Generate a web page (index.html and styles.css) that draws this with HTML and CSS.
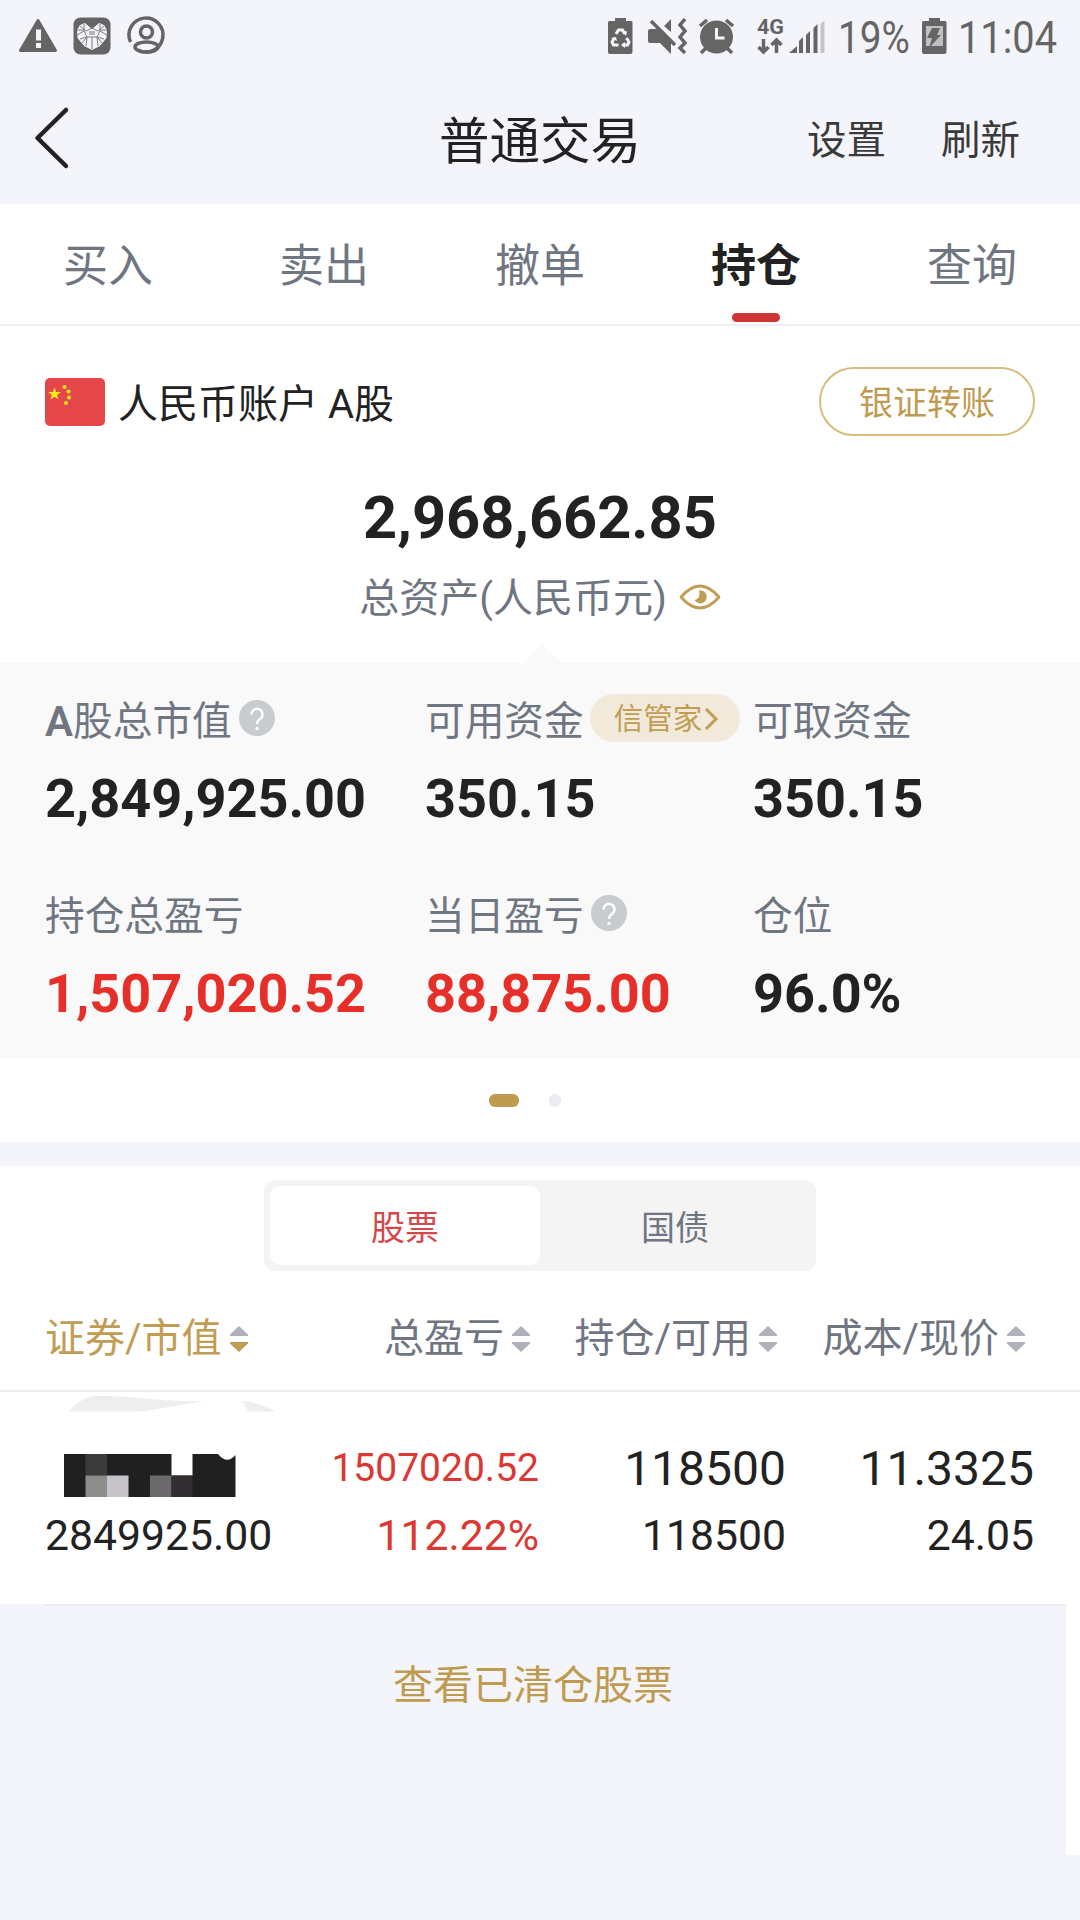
FILE: index.html
```html
<!DOCTYPE html>
<html lang="zh-CN">
<head>
	<meta charset="UTF-8">
	<title>普通交易</title>
	<link rel="stylesheet" href="styles.css">
</head>
<body>
<div class="page">
	<!-- 状态栏 -->
	<div class="status">
		<div class="status-l">
			<svg width="65" height="62" viewBox="0 0 65 62"><path d="M38 20.500L55.500 50.500H20.500Z" fill="#656565" stroke="#656565" stroke-width="3" stroke-linejoin="round"/><path d="M36 29.500h5v11h-5zM36 43h5v5h-5z" fill="#f4f5fa"/></svg>
			<svg width="55" height="62" viewBox="65 0 55 62"><rect x="73.500" y="17.500" width="37" height="37" rx="7" fill="#656565"/><path d="M92 50L84 46L77.500 38L77 30L80 25L85 23L92 29L99 23L104 25L107 30L106.500 38L100 46Z" fill="#f4f5fa"/><path d="M80 26l6 5 6-3 6 3 6-5M77 35l7-4 3 6-5 6M107 35l-7-4-3 6 5 6M84 24v7M100 24v7M86 46l1-9h10l1 9M92 37v12M77 30h7M100 30h7M80 39l7-2M104 39l-7-2" stroke="#7c7c7c" stroke-width="1" fill="none"/><path d="M89 31h6v4h-6z" fill="#b5b5b7"/></svg>
			<svg width="60" height="62" viewBox="120 0 60 62" fill="none" stroke="#656565" stroke-width="3.500"><path d="M130.500 42A17 17 0 1 1 138 50"/><circle cx="146.500" cy="32" r="6"/><ellipse cx="146.500" cy="47" rx="11.500" ry="5"/></svg>
		</div>
		<div class="status-r">
			<svg width="37" height="62" viewBox="603 0 37 62"><path d="M615 21v-3h11v3h5q1.500 0 1.500 1.500V52q0 2-2 2h-20.500q-2 0-2-2V22.500q0-1.500 1.500-1.500z" fill="#656565"/><path d="M616 34l2.500-4h4l2.500 4M626.500 38l2.500 4-1.500 3h-5M618.500 45h-5l-1.500-3 2.500-4" fill="none" stroke="#f4f5fa" stroke-width="3"/><path d="M623 32l4-1-1 5zM625 42v6l-4-3zM611 38l5-1 1 4z" fill="#f4f5fa"/></svg>
			<svg width="54" height="62" viewBox="640 0 54 62"><path d="M648 31q0-2 2-2h8l13 12v13l-11-11h-10q-2 0-2-2zM671 19v13l-7-6z" fill="#656565"/><path d="M651 21L675 45M685 19l-5 6 5 6-5 6 5 6-5 5 5 5" fill="none" stroke="#656565" stroke-width="3.500"/></svg>
			<svg width="56" height="62" viewBox="694 0 56 62"><circle cx="716.500" cy="37" r="16.500" fill="#656565"/><path d="M706 48l-5 5M727 48l5 5M700 26l7-6M733 26l-7-6" stroke="#656565" stroke-width="3.500"/><path d="M716.500 28v10h8" fill="none" stroke="#f4f5fa" stroke-width="3"/></svg>
			<svg width="38" height="62" viewBox="750 0 38 62"><text class="net" x="757" y="33.500" textLength="27" lengthAdjust="spacingAndGlyphs">4G</text><path d="M763.500 39v13M758.500 47l5 5 5-5M776.500 53V40M771.500 45l5-5 5 5" fill="none" stroke="#656565" stroke-width="3.500"/></svg>
			<svg width="47" height="62" viewBox="788 0 47 62"><path d="M789 53l8-7v7zM799 53V41l4-4v16zM806 53V35l4-4v22zM813.500 53V28l4-4v29z" fill="#656565"/><path d="M820.500 53V24l4-3.500V53z" fill="#c3c4c8"/></svg>
			<svg width="80" height="62" viewBox="835 0 80 62"><text class="num" x="838" y="53" textLength="72" lengthAdjust="spacingAndGlyphs">19%</text></svg>
			<svg width="40" height="62" viewBox="915 0 40 62"><path d="M929 21v-3h11v3h5q1.500 0 1.500 1.500V52q0 2-2 2H924q-2 0-2-2V22.500q0-1.500 1.500-1.500z" fill="#656565"/><path d="M926 26h17v20h-17z" fill="#bfc0c3"/><path d="M932 28h8l-3 7h4l-12 13 3-10h-5z" fill="#656565"/></svg>
			<svg width="125" height="62" viewBox="955 0 125 62"><text class="num" x="958" y="53" textLength="99" lengthAdjust="spacingAndGlyphs">11:04</text></svg>
		</div>
	</div>

	<!-- 标题栏 -->
	<div class="nav">
		<svg class="back" width="40" height="64" viewBox="0 0 40 64"><path d="M34 4L5.500 32L34 60" fill="none" stroke="#222" stroke-width="4.500" stroke-linecap="round" stroke-linejoin="round"/></svg>
		<h1 class="nav-tit">普通交易</h1>
		<div class="nav-r"><span>设置</span><span>刷新</span></div>
	</div>

	<ul class="tabs">
		<li>买入</li>
		<li>卖出</li>
		<li>撤单</li>
		<li class="on">持仓</li>
		<li>查询</li>
	</ul>

	<!-- 账户资产 -->
	<div class="account">
		<svg class="flag" width="60" height="48" viewBox="0 0 60 48"><rect width="60" height="48" rx="5" fill="#e4464a"/><g fill="#ffe81a"><path d="M9.500 9.500l1.700 4.500h4.800l-3.900 2.900 1.500 4.700-4.100-2.800-4.100 2.800 1.500-4.700L3 14h4.800z"/><circle cx="19.500" cy="9" r="2"/><circle cx="23.500" cy="13.500" r="2"/><circle cx="24" cy="19.500" r="2"/><circle cx="21" cy="25" r="2"/></g></svg>
		<span class="account-name">人民币账户 A股</span>
		<button class="transfer">银证转账</button>
	</div>
	<div class="total">2,968,662.85</div>
	<div class="total-tit">
		<span>总资产(人民币元)</span>
		<svg class="eye" width="42" height="26" viewBox="0 0 42 26"><path d="M2 13Q21-9 40 13Q21 35 2 13Z" fill="none" stroke="#c19d54" stroke-width="2.800" stroke-linejoin="round"/><path d="M20 6.500a6.500 6.500 0 1 1-4.500 9.500Q22 15 20 6.500Z" fill="#c19d54"/></svg>
	</div>

	<div class="grid">
		<div class="cell">
			<div class="cell-tit"><b>A</b>股总市值<svg class="help" width="36" height="36" viewBox="0 0 36 36"><circle cx="18" cy="18" r="18" fill="#c8cbd0"/><path d="M12.500 14.500a5.500 5.500 0 1 1 8.500 4.500q-3 2-3 5" fill="none" stroke="#fff" stroke-width="2.400"/><circle cx="18" cy="28.500" r="1.700" fill="#fff"/></svg></div>
			<div class="cell-num">2,849,925.00</div>
		</div>
		<div class="cell">
			<div class="cell-tit">可用资金<span class="pill">信管家<svg width="16" height="24" viewBox="0 0 16 24"><path d="M3 2L13 12L3 22" fill="none" stroke="#c19d54" stroke-width="3"/></svg></span></div>
			<div class="cell-num">350.15</div>
		</div>
		<div class="cell">
			<div class="cell-tit">可取资金</div>
			<div class="cell-num">350.15</div>
		</div>
		<div class="cell">
			<div class="cell-tit">持仓总盈亏</div>
			<div class="cell-num red">1,507,020.52</div>
		</div>
		<div class="cell">
			<div class="cell-tit">当日盈亏<svg class="help" width="36" height="36" viewBox="0 0 36 36"><circle cx="18" cy="18" r="18" fill="#c8cbd0"/><path d="M12.500 14.500a5.500 5.500 0 1 1 8.500 4.500q-3 2-3 5" fill="none" stroke="#fff" stroke-width="2.400"/><circle cx="18" cy="28.500" r="1.700" fill="#fff"/></svg></div>
			<div class="cell-num red">88,875.00</div>
		</div>
		<div class="cell">
			<div class="cell-tit">仓位</div>
			<div class="cell-num">96.0%</div>
		</div>
	</div>
	<div class="pager"><i class="on"></i><i></i></div>

	<!-- 持仓列表 -->
	<div class="seg-box">
		<div class="seg"><span class="on">股票</span><span>国债</span></div>
	</div>
	<div class="row head">
		<div class="gold">证券/市值<svg class="sort down" width="18" height="26" viewBox="0 0 18 26"><path d="M9 0L18 8.500V10H0V8.500Z"/><path class="dn" d="M9 26L18 17.500V16H0V17.500Z"/></svg></div>
		<div>总盈亏<svg class="sort" width="18" height="26" viewBox="0 0 18 26"><path d="M9 0L18 8.500V10H0V8.500Z"/><path d="M9 26L18 17.500V16H0V17.500Z"/></svg></div>
		<div>持仓/可用<svg class="sort" width="18" height="26" viewBox="0 0 18 26"><path d="M9 0L18 8.500V10H0V8.500Z"/><path d="M9 26L18 17.500V16H0V17.500Z"/></svg></div>
		<div>成本/现价<svg class="sort" width="18" height="26" viewBox="0 0 18 26"><path d="M9 0L18 8.500V10H0V8.500Z"/><path d="M9 26L18 17.500V16H0V17.500Z"/></svg></div>
	</div>
	<div class="row stock">
		<div>
			<!-- 打码的股票名称 -->
			<svg class="mask" width="240" height="110" viewBox="45 1392 240 110">
				<path d="M69 1411.500Q82 1396 97 1396C130 1395 145 1401 205 1401Q175 1406 142 1411.500ZM241 1401Q260 1402 275 1411.500H247.500Q247 1406 241 1401Z" fill="#eee"/>
				<path d="M64 1454H171.500V1475.500H192.500V1454H218Q227 1465 235.500 1455V1497H64Z" fill="#202020"/>
				<path d="M85.500 1454H107V1475.500H85.500Z" fill="#3b3b3b"/>
				<path d="M85.500 1475.500H107V1497H85.500Z" fill="#8c8e8b"/>
				<path d="M107 1475.500H128.500V1497H107Z" fill="#c6c4c8"/>
				<path d="M150 1475.500H171.500V1497H150Z" fill="#6b696c"/>
				<path d="M171.500 1475.500H192.500V1497H171.500Z" fill="#332e32"/>
			</svg>
			<p>2849925.00</p>
		</div>
		<div class="red"><p class="profit">1507020.52</p><p>112.22%</p></div>
		<div><p class="big">118500</p><p>118500</p></div>
		<div><p class="big">11.3325</p><p>24.05</p></div>
	</div>
	<div class="foot"><a class="cleared">查看已清仓股票</a></div>
</div>
</body>
</html>
```
FILE: styles.css
```css
body,h1,ul,p{
	margin: 0;
	padding: 0;
}
ul{
	list-style: none;
}
svg{
	display: block;
	flex: none;
	overflow: visible;
}
body{
	background-color: #f4f5fa;
	font-family: Roboto,"Noto Sans CJK SC",sans-serif;
	color: #222;
}
.page{
	width: 1080px;
	height: 1920px;
	overflow: hidden;
}
.status{
	display: flex;
	justify-content: space-between;
	height: 62px;
}
.status-l,.status-r{
	display: flex;
}
.num{
	font-size: 45px;
	fill: #656565;
}
.net{
	font-size: 20px;
	font-weight: bold;
	fill: #656565;
}
.nav{
	display: grid;
	grid-template-columns: 1fr 200px 1fr;
	align-items: center;
	box-sizing: border-box;
	height: 142px;
	padding: 16px 60px 0 32px;
}
.back{
	margin-top: -6px;
}
.nav-tit{
	font-size: 50.500px;
	font-weight: normal;
	line-height: 60px;
	white-space: nowrap;
	margin: 2px 0 0 13px;
}
.nav-r{
	display: flex;
	justify-content: flex-end;
	gap: 55px;
	font-size: 39.500px;
	line-height: 60px;
	color: #3a3a3a;
}
.tabs{
	display: flex;
	height: 120px;
	border-bottom: 2px solid #eeeff3;
	background-color: #fff;
}
.tabs li{
	display: flex;
	flex-direction: column;
	align-items: center;
	flex: 1;
	font-size: 45px;
	line-height: 109px;
	padding-top: 8px;
	color: #6f7682;
	height: 111px;
}
.tabs .on{
	color: #222;
	font-weight: bold;
}
.tabs .on:after{
	content: "";
	flex: none;
	width: 48px;
	height: 9px;
	margin-top: -8px;
	border-radius: 5px;
	background-color: #d03535;
}
.account{
	display: flex;
	align-items: center;
	height: 152px;
	padding: 0 45px;
	background-color: #fff;
}
.account-name{
	margin-left: 13px;
	padding-top: 5px;
	font-size: 40px;
	line-height: 60px;
}
.transfer{
	width: 216px;
	height: 69px;
	margin: 0 0 1px auto;
	padding: 2px 0 0;
	border: 2px solid #d9bc7c;
	border-radius: 35px;
	background-color: #fff;
	font-family: inherit;
	font-size: 34px;
	line-height: 50px;
	color: #bf9b52;
}
.total{
	font-size: 59.500px;
	font-weight: bold;
	line-height: 80px;
	text-align: center;
	background-color: #fff;
}
.total-tit{
	display: flex;
	justify-content: center;
	align-items: center;
	gap: 12px;
	height: 80px;
	padding-bottom: 25px;
	font-size: 40px;
	color: #6f7682;
	background-color: #fff;
}
.total-tit span{
	line-height: 80px;
	padding-top: 1px;
}
.eye{
	margin-bottom: 3px;
}
.grid{
	position: relative;
	display: grid;
	grid-template-columns: 380px 328px 1fr;
	align-content: start;
	row-gap: 37px;
	box-sizing: border-box;
	height: 396px;
	padding: 28px 0 0 45px;
	background-color: #f9f9f9;
}
/* 指向总资产的小三角 */
.grid:before{
	content: "";
	position: absolute;
	left: 523px;
	top: -18px;
	border: 19px solid transparent;
	border-top: 0;
	border-bottom: 18px solid #f9f9f9;
}
.cell-tit{
	display: flex;
	align-items: center;
	box-sizing: border-box;
	height: 60px;
	padding-top: 1px;
	font-size: 39.700px;
	line-height: 60px;
	color: #6f7682;
	white-space: nowrap;
}
.cell-tit b{
	font-weight: 600;
	font-size: 42px;
}
.help{
	margin: 0 0 7px 7px;
}
.pill{
	display: flex;
	align-items: center;
	box-sizing: border-box;
	width: 150px;
	height: 48px;
	margin: 0 0 7px 6px;
	padding: 1px 0 0 24px;
	border-radius: 25px;
	background-color: #f1eadb;
	font-size: 29.500px;
	color: #c19d54;
}
.pill svg{
	margin-left: 1px;
}
.cell-num{
	font-size: 54px;
	font-weight: bold;
	line-height: 96px;
	padding-bottom: 2px;
}
.cell-num.red{
	color: #e62f29;
}
.pager{
	display: flex;
	justify-content: center;
	gap: 30px;
	height: 48px;
	padding: 35px 30px 0 0;
	background-color: #fff;
}
.pager i{
	width: 12px;
	height: 13px;
	border-radius: 6px;
	background-color: #ebecf1;
}
.pager .on{
	width: 30px;
	background-color: #bf9b52;
}
.seg-box{
	margin-top: 24px;
	padding-top: 14px;
	background-color: #fff;
}
.seg{
	display: flex;
	box-sizing: border-box;
	width: 552px;
	height: 91px;
	margin: 0 auto;
	padding: 6px;
	border-radius: 11px;
	background-color: #f4f4f4;
}
.seg span{
	flex: 1;
	font-size: 34px;
	line-height: 84px;
	text-align: center;
	color: #6f7682;
}
.seg .on{
	height: 79px;
	border-radius: 10px;
	background-color: #fff;
	color: #d5474a;
}
.row{
	display: grid;
	grid-template-columns: 255px 239px 247px 248px;
	padding-left: 45px;
	background-color: #fff;
	text-align: right;
}
.head{
	height: 119px;
	border-bottom: 2px solid #ebecf1;
	font-size: 40px;
	line-height: 60px;
	color: #6f7682;
}
.head div{
	display: flex;
	justify-content: flex-end;
	align-items: center;
	height: 60px;
	padding: 38px 9px 0 0;
	white-space: nowrap;
}
.head .gold{
	justify-content: flex-start;
	color: #c19d54;
}
.sort{
	margin-left: 8px;
	fill: #aeb1ba;
}
.down .dn{
	fill: #c19d54;
}
.stock{
	height: 212px;
}
.stock p{
	font-size: 42.700px;
	line-height: 67px;
}
.stock div{
	padding-top: 43px;
}
.stock div:first-child{
	padding-top: 0;
	text-align: left;
}
.stock .big{
	font-size: 48px;
}
.stock .profit{
	font-size: 39px;
}
.stock .red{
	color: #dc3733;
}
.foot{
	display: flex;
	justify-content: center;
	box-sizing: border-box;
	height: 251px;
	border-right: 14px solid #fff;
	position: relative;
}
.foot:before{
	content: "";
	position: absolute;
	left: 45px;
	right: 0;
	top: 0;
	height: 2px;
	background-color: #ebecf1;
}
.cleared{
	padding-top: 52px;
	font-size: 40px;
	line-height: 60px;
	color: #bf9b52;
}
```
